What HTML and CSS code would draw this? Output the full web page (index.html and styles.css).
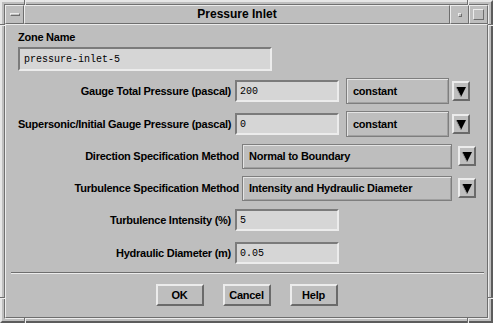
FILE: index.html
```html
<!DOCTYPE html>
<html lang="en">
<head>
    <meta charset="UTF-8">
    <title>Pressure Inlet</title>
    <link rel="stylesheet" href="styles.css">
</head>
<body>

<div class="window">
    <!-- frame corner notches -->
    <div class="notch v top" style="left:22px"></div>
    <div class="notch v top" style="left:465px"></div>
    <div class="notch v bottom" style="left:22px"></div>
    <div class="notch v bottom" style="left:465px"></div>
    <div class="notch h left" style="top:22px"></div>
    <div class="notch h left" style="top:295px"></div>
    <div class="notch h right" style="top:22px"></div>
    <div class="notch h right" style="top:295px"></div>

    <div class="frame">
        <div class="titlebar">
            <div class="tb-btn"><span class="menu-bar"></span></div>
            <div class="title">Pressure Inlet</div>
            <div class="tb-btn"><span class="min-box"></span></div>
            <div class="tb-btn"><span class="max-box"></span></div>
        </div>

        <div class="client">
            <div class="zone-label">Zone Name</div>
            <div class="field zone-field">pressure-inlet-5</div>

            <div class="rows">
                <div class="row">
                    <div class="label">Gauge Total Pressure (pascal)</div>
                    <div class="field">200</div>
                    <div class="option">constant</div>
                    <div class="arrow"><svg width="14" height="16" viewBox="0 0 14 16"><polygon points="2,4 12,4 7,14" fill="#000"/><polyline points="2,4 7,14" stroke="#9a9a9a" fill="none"/></svg></div>
                </div>
                <div class="row extra">
                    <div class="label">Supersonic/Initial Gauge Pressure (pascal)</div>
                    <div class="field">0</div>
                    <div class="option">constant</div>
                    <div class="arrow"><svg width="14" height="16" viewBox="0 0 14 16"><polygon points="2,4 12,4 7,14" fill="#000"/><polyline points="2,4 7,14" stroke="#9a9a9a" fill="none"/></svg></div>
                </div>
                <div class="row method">
                    <div class="label">Direction Specification Method</div>
                    <div class="option">Normal to Boundary</div>
                    <div class="arrow"><svg width="14" height="16" viewBox="0 0 14 16"><polygon points="2,4 12,4 7,14" fill="#000"/><polyline points="2,4 7,14" stroke="#9a9a9a" fill="none"/></svg></div>
                </div>
                <div class="row method">
                    <div class="label">Turbulence Specification Method</div>
                    <div class="option">Intensity and Hydraulic Diameter</div>
                    <div class="arrow"><svg width="14" height="16" viewBox="0 0 14 16"><polygon points="2,4 12,4 7,14" fill="#000"/><polyline points="2,4 7,14" stroke="#9a9a9a" fill="none"/></svg></div>
                </div>
                <div class="row">
                    <div class="label">Turbulence Intensity (%)</div>
                    <div class="field">5</div>
                </div>
                <div class="row extra">
                    <div class="label">Hydraulic Diameter (m)</div>
                    <div class="field">0.05</div>
                </div>
            </div>

            <div class="sep"></div>

            <div class="buttons">
                <button class="btn">OK</button>
                <button class="btn">Cancel</button>
                <button class="btn">Help</button>
            </div>
        </div>
    </div>
</div>

</body>
</html>
```

FILE: styles.css
```css
body {
    margin: 0;
    background-color: #bebebe;
    font-family: "Liberation Sans", Arial, sans-serif;
    font-size: 11px;
    font-weight: bold;
    letter-spacing: -0.25px;
    color: #000;
}

.window {
    position: relative;
    box-sizing: border-box;
    width: 493px;
    height: 323px;
    border: 2px solid;
    border-color: #e6e6e6 #5c5c5c #5c5c5c #e6e6e6;
    padding: 2px;
}
.frame {
    box-sizing: border-box;
    height: 100%;
    border: 1px solid;
    border-color: #707070 #ececec #ececec #707070;
    display: flex;
    flex-direction: column;
}

/* little cuts in the window frame near the corners */
.notch {
    position: absolute;
    background-color: #6e6e6e;
}
.notch.v { width: 1px; height: 5px; box-shadow: 1px 0 0 #ececec; }
.notch.h { width: 5px; height: 1px; box-shadow: 0 1px 0 #ececec; }
.notch.top { top: -2px; }
.notch.bottom { bottom: -2px; }
.notch.left { left: -2px; }
.notch.right { right: -2px; }

.titlebar {
    display: flex;
    height: 19px;
    flex-shrink: 0;
}
.tb-btn, .title {
    box-sizing: border-box;
    border: 1px solid;
    border-color: #ececec #6e6e6e #6e6e6e #ececec;
}
.tb-btn {
    width: 19px;
    display: flex;
    align-items: center;
    justify-content: center;
}
.title {
    flex: 1;
    text-align: center;
    font-size: 12px;
    letter-spacing: 0;
    line-height: 17px;
}
.menu-bar {
    box-sizing: border-box;
    width: 10px;
    height: 3px;
    border: 1px solid;
    border-color: #ececec #6e6e6e #6e6e6e #ececec;
}
.min-box {
    box-sizing: border-box;
    width: 4px;
    height: 4px;
    border: 1px solid;
    border-color: #ececec #6e6e6e #6e6e6e #ececec;
}
.max-box {
    box-sizing: border-box;
    width: 11px;
    height: 11px;
    border: 1px solid;
    border-color: #ececec #6e6e6e #6e6e6e #ececec;
}

.client {
    flex: 1;
    border: 1px solid;
    border-color: #ececec #6e6e6e #6e6e6e #ececec;
    padding-top: 6px;
}
.zone-label {
    margin-left: 12px;
    line-height: 13px;
}

.field {
    box-sizing: border-box;
    border: 2px solid;
    border-color: #7b7b7b #ececec #ececec #7b7b7b;
    background-color: #d6d6d6;
    font-family: "Liberation Mono", monospace;
    font-size: 10px;
    font-weight: normal;
    letter-spacing: 0;
    padding-left: 3px;
    display: flex;
    align-items: center;
}
.zone-field {
    margin: 3px 0 0 12px;
    width: 254px;
    height: 24px;
    padding-left: 4px;
}

.rows {
    margin: 7px 0 0 12px;
    display: flex;
    flex-direction: column;
    gap: 6px;
}
.row {
    display: flex;
    align-items: center;
    height: 26px;
}
.row.extra {
    margin-top: 1px;
}
.label {
    width: 213px;
    margin-right: 4px;
    text-align: right;
    white-space: nowrap;
}
.row .field {
    width: 104px;
    height: 22px;
}
.option {
    box-sizing: border-box;
    width: 103px;
    height: 26px;
    margin-left: 7px;
    padding-left: 6px;
    border: 1px solid #7e7e7e;
    box-shadow: inset 1px 1px 0 #e4e4e4, inset -1px -1px 0 #a0a0a0;
    display: flex;
    align-items: center;
    white-space: nowrap;
}
.arrow {
    box-sizing: border-box;
    width: 18px;
    height: 20px;
    margin-left: 3px;
    border: 2px solid;
    border-color: #ececec #6a6a6a #6a6a6a #ececec;
    display: flex;
    align-items: center;
    justify-content: center;
}
.row.method .label {
    width: 221px;
    margin-right: 3px;
}
.row.method .option {
    width: 210px;
    height: 25px;
    margin-left: 0;
}
.row.method .arrow {
    margin-left: 6px;
}

.sep {
    margin: 6px 3px 0 5px;
    border-top: 1px solid #6e6e6e;
    border-bottom: 1px solid #ececec;
}

.buttons {
    display: flex;
    justify-content: center;
    gap: 19px;
    margin-top: 10px;
}
.btn {
    box-sizing: border-box;
    width: 48px;
    height: 22px;
    padding: 0;
    background-color: #bebebe;
    border: 2px solid;
    border-color: #ececec #6a6a6a #6a6a6a #ececec;
    font-family: inherit;
    font-size: 11px;
    font-weight: bold;
    letter-spacing: -0.25px;
    color: #000;
}
```
